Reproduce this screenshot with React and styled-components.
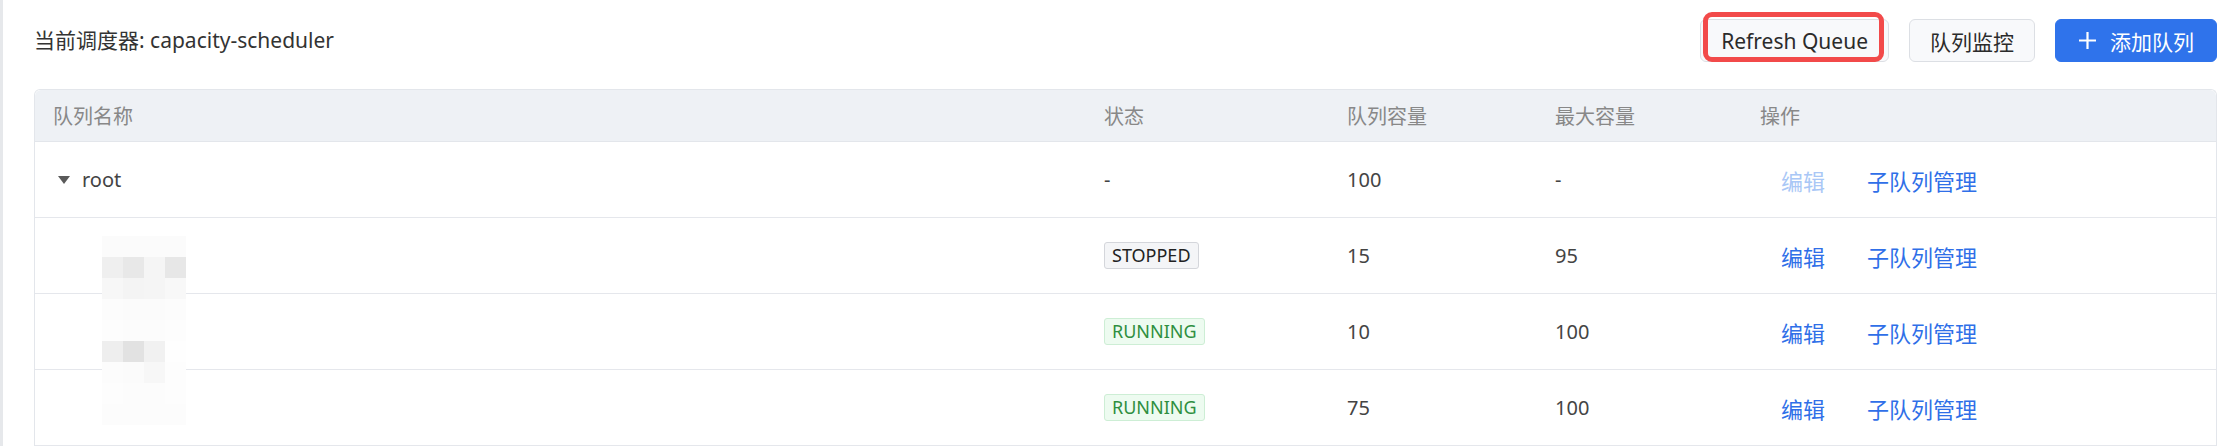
import React from "react";
import styled, { createGlobalStyle } from "styled-components";

const GlobalStyle = createGlobalStyle`
  html, body {
    margin: 0;
    padding: 0;
    background: #ffffff;
  }
  body {
    font-family: "Noto Sans", "Noto Sans CJK SC", sans-serif;
    color: #333333;
  }
  * {
    box-sizing: border-box;
  }
`;

const COLUMNS = "1051px 243px 208px 205px 1fr";

const Page = styled.div`
  height: 446px;
  overflow: hidden;
  border-left: 3px solid #e6e8eb;
  padding: 19px 6px 0 31px;
`;

const Toolbar = styled.div`
  display: flex;
  align-items: center;
  justify-content: space-between;
  margin-bottom: 27px;
`;

const Title = styled.div`
  font-size: 21px;
  color: #333333;
  line-height: 43px;
`;

const Actions = styled.div`
  display: flex;
  align-items: center;
  gap: 20px;
`;

const Button = styled.button`
  position: relative;
  display: inline-flex;
  align-items: center;
  gap: 13px;
  height: 43px;
  padding: 0 ${(p) => (p.$primary ? "22px" : "20px")};
  border-radius: 6px;
  border: 1px solid ${(p) => (p.$primary ? "#2f73eb" : "#dcdfe4")};
  background: ${(p) => (p.$primary ? "#2f73eb" : "#f8f9fb")};
  color: ${(p) => (p.$primary ? "#ffffff" : "#2b2b2b")};
  font-family: "Noto Sans", "Noto Sans CJK SC", sans-serif;
  font-size: 21px;
  cursor: pointer;
`;

const Highlight = styled.span`
  position: absolute;
  top: -8px;
  bottom: -1px;
  left: 2px;
  right: 4px;
  border: 5px solid #f24a4a;
  border-radius: 9px;
  pointer-events: none;
`;

const Table = styled.div`
  position: relative;
  border: 1px solid #e3e6eb;
  border-bottom: none;
  border-radius: 6px 6px 0 0;
`;

const HeadRow = styled.div`
  display: grid;
  grid-template-columns: ${COLUMNS};
  height: 52px;
  background: #eef1f5;
  border-bottom: 1px solid #e3e6eb;
  border-radius: 6px 6px 0 0;
  align-items: center;
`;

const HeadCell = styled.div`
  padding-left: 18px;
  font-size: 20px;
  color: #888888;
`;

const Row = styled.div`
  display: grid;
  grid-template-columns: ${COLUMNS};
  height: 76px;
  border-bottom: 1px solid #e5e7ec;
  align-items: center;
`;

const Cell = styled.div`
  display: flex;
  align-items: center;
  padding-left: 18px;
  font-size: 20px;
  color: #444444;
`;

const Caret = styled.span`
  display: inline-flex;
  justify-content: center;
  width: 21px;
  margin-right: 8px;
`;

const Tag = styled.span`
  display: inline-block;
  height: 27px;
  line-height: 25px;
  padding: 0 7px;
  font-size: 18px;
  border-radius: 3px;
  border: 1px solid ${(p) => (p.$running ? "#cdeed5" : "#d4d6db")};
  background: ${(p) => (p.$running ? "#edfbf0" : "#f4f5f7")};
  color: ${(p) => (p.$running ? "#2f8f40" : "#222222")};
`;

const OpCell = styled.div`
  display: flex;
  align-items: center;
  padding-left: 18px;
`;

const LinkButton = styled.span`
  padding: 0 21px;
  font-size: 22px;
  color: ${(p) => (p.$disabled ? "#a9c7f6" : "#2f6fe8")};
  cursor: ${(p) => (p.$disabled ? "not-allowed" : "pointer")};
`;

const Mosaic = styled.div`
  position: absolute;
  left: 67px;
  top: 146px;
  display: grid;
  grid-template-columns: repeat(4, 21px);
  grid-auto-rows: 21px;
`;

const Tile = styled.span`
  background: ${(p) => p.$c};
`;

const mosaic = [
  ["#fbfbfb", "#fbfbfb", "#fbfbfb", "#fbfbfb"],
  ["#efefef", "#e8e8e8", "#f5f5f5", "#e7e7e7"],
  ["#f7f7f7", "#f4f4f4", "#f5f5f5", "#f8f8f8"],
  ["#fcfcfc", "#fbfbfb", "#fbfbfb", "#fcfcfc"],
  ["#fdfdfd", "#fcfcfc", "#fcfcfc", "#fdfdfd"],
  ["#eeeeee", "#e2e2e2", "#f1f1f1", "#fefefe"],
  ["#fcfcfc", "#fbfbfb", "#f7f7f7", "#fdfdfd"],
  ["#fdfdfd", "#fcfcfc", "#fcfcfc", "#fdfdfd"],
  ["#fcfcfc", "#fcfcfc", "#fcfcfc", "#fcfcfc"],
];

const rows = [
  { status: "STOPPED", capacity: "15", max: "95" },
  { status: "RUNNING", capacity: "10", max: "100" },
  { status: "RUNNING", capacity: "75", max: "100" },
];

function PlusIcon() {
  return (
    <svg width="19" height="19" viewBox="0 0 19 19">
      <path d="M9.5 1v17M1 9.5h17" stroke="#ffffff" strokeWidth="2.2" />
    </svg>
  );
}

function CaretDown() {
  return (
    <svg width="12" height="8" viewBox="0 0 12 8">
      <path d="M0 0h12L6 8z" fill="#5a5a5a" />
    </svg>
  );
}

export default function App() {
  return (
    <>
      <GlobalStyle />
      <Page>
        <Toolbar>
          <Title>当前调度器: capacity-scheduler</Title>
          <Actions>
            <Button>
              Refresh Queue
              <Highlight />
            </Button>
            <Button>队列监控</Button>
            <Button $primary>
              <PlusIcon />
              添加队列
            </Button>
          </Actions>
        </Toolbar>
        <Table>
          <HeadRow>
            <HeadCell>队列名称</HeadCell>
            <HeadCell>状态</HeadCell>
            <HeadCell>队列容量</HeadCell>
            <HeadCell>最大容量</HeadCell>
            <HeadCell>操作</HeadCell>
          </HeadRow>
          <Row>
            <Cell>
              <Caret>
                <CaretDown />
              </Caret>
              root
            </Cell>
            <Cell>-</Cell>
            <Cell>100</Cell>
            <Cell>-</Cell>
            <OpCell>
              <LinkButton $disabled>编辑</LinkButton>
              <LinkButton>子队列管理</LinkButton>
            </OpCell>
          </Row>
          {rows.map((r, i) => (
            <Row key={i}>
              <Cell />
              <Cell>
                <Tag $running={r.status === "RUNNING"}>{r.status}</Tag>
              </Cell>
              <Cell>{r.capacity}</Cell>
              <Cell>{r.max}</Cell>
              <OpCell>
                <LinkButton>编辑</LinkButton>
                <LinkButton>子队列管理</LinkButton>
              </OpCell>
            </Row>
          ))}
          <Mosaic>
            {mosaic.flat().map((c, i) => (
              <Tile key={i} $c={c} />
            ))}
          </Mosaic>
        </Table>
      </Page>
    </>
  );
}
